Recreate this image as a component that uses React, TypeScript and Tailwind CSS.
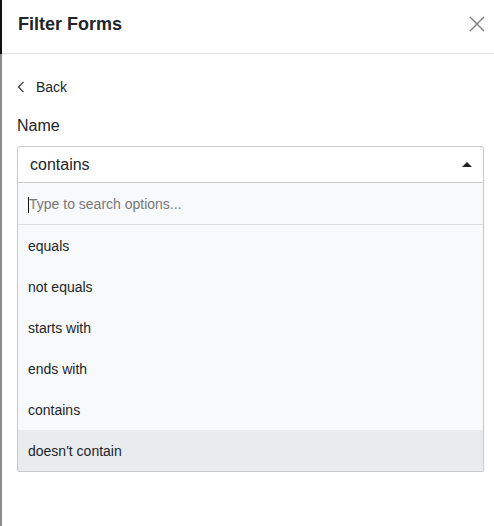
import React from "react";

const options = ["equals", "not equals", "starts with", "ends with", "contains", "doesn't contain"];

export default function App() {
  return (
    <div className="flex w-[494px] h-[526px] bg-white text-[#212529] overflow-hidden" style={{ fontFamily: '"Liberation Sans", Arial, sans-serif' }}>
      {/* edge of the page behind the drawer */}
      <div className="flex flex-col w-[2px] shrink-0">
        <div className="h-[54px] bg-[#111]" />
        <div className="flex-1 bg-[#8c8c8c]" />
      </div>

      <div className="flex-1 flex flex-col">
        <div className="h-[54px] shrink-0 flex items-center justify-between pl-[16px] pr-[9px] pb-[6px] border-b border-[#dedede]">
          <h2 className="text-[18px] font-bold leading-none">Filter Forms</h2>
          <button className="w-[16px] h-[16px] text-[#7b7b7b]">
            <svg viewBox="0 0 16 16" width="16" height="16" fill="none" stroke="currentColor" strokeWidth="1.4">
              <path d="M1 1 L15 15 M15 1 L1 15" />
            </svg>
          </button>
        </div>

        <div className="flex flex-col pl-[15px] pr-[10px]">
          <button className="mt-[23px] flex items-center h-[20px] text-[14px] self-start">
            <svg viewBox="0 0 8 12" width="8" height="12" fill="none" stroke="#333" strokeWidth="1.2">
              <path d="M6.5 0.8 L1.5 6 L6.5 11.2" />
            </svg>
            <span className="ml-[11px]">Back</span>
          </button>

          <label className="mt-[17px] text-[16px] leading-[24px]">Name</label>

          <div className="mt-[8px]">
            <div className="h-[37px] flex items-center justify-between border border-[#c9c9c9] rounded-t-[3px] pl-[12px] pr-[11px] text-[16px]">
              <span>contains</span>
              <svg viewBox="0 0 10 5" width="10" height="5">
                <path d="M0 5 L5 0 L10 5 Z" fill="#222" />
              </svg>
            </div>
            <div className="border border-t-0 border-[#c9c9c9] bg-[#f8f9fa] rounded-b-[2px]">
              <div className="h-[42px] flex items-center pl-[10px] pt-[2px] border-b border-[#dedede] text-[14px]">
                <span className="w-px h-[16px] bg-[#111]" />
                <span className="text-[#777]">Type to search options...</span>
              </div>
              {options.map((o) => (
                <div key={o} className={`h-[41px] flex items-center pl-[10px] pt-[2px] text-[14px] ${o === "doesn't contain" ? "bg-[#e9ecef]" : ""}`}>
                  {o}
                </div>
              ))}
            </div>
          </div>
        </div>
      </div>
    </div>
  );
}
